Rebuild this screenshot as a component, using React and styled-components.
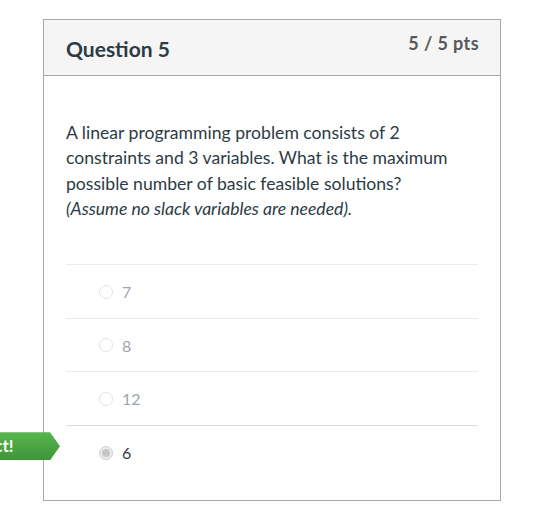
import React from "react";
import styled, { createGlobalStyle } from "styled-components";

const GlobalStyle = createGlobalStyle`
  html, body { margin: 0; padding: 0; background: #fff; }
  body { font-family: Lato, "Open Sans", sans-serif; overflow: hidden; }
  * { box-sizing: border-box; }
`;

const Page = styled.div`
  width: 541px;
  height: 516px;
  padding: 19px 0 0 43px;
`;

const Card = styled.section`
  width: 458px;
  border: 1px solid #a8a8a8;
  background: #fff;
`;

const Header = styled.header`
  display: flex;
  justify-content: space-between;
  align-items: flex-start;
  height: 56px;
  padding: 0 21px 0 22px;
  background: #f5f5f5;
  border-bottom: 1px solid #a8a8a8;
`;

const Title = styled.h2`
  margin: 0;
  padding-top: 17px;
  font-size: 21px;
  font-weight: 700;
  line-height: 24px;
  color: #2d3b45;
`;

const Points = styled.div`
  padding-top: 13px;
  font-size: 18px;
  font-weight: 700;
  letter-spacing: 0.4px;
  line-height: 20px;
  color: #555a5f;
`;

const Body = styled.div`
  padding: 44px 22px 21px 22px;
`;

const QuestionText = styled.div`
  font-size: 17.6px;
  line-height: 25.3px;
  color: #2d3b45;
  margin-bottom: 43px;
`;

const Hint = styled.em`
  font-style: italic;
`;

const AnswerList = styled.div`
  display: flex;
  flex-direction: column;
`;

const Row = styled.div`
  position: relative;
  display: flex;
  align-items: center;
  gap: 9px;
  height: ${(p) => (p.$tall ? 54 : 53)}px;
  padding-left: 33px;
  border-top: 1px solid ${(p) => (p.$selected ? "#dcdcdc" : "#ebebeb")};
`;

const Radio = styled.span`
  flex: none;
  display: flex;
  align-items: center;
  justify-content: center;
  width: 14px;
  height: 14px;
  border-radius: 50%;
  border: 1px solid ${(p) => (p.$checked ? "#cfcfcf" : "#e3e3e3")};
  background: ${(p) => (p.$checked ? "#ececec" : "#fff")};
  &::after {
    content: "";
    display: ${(p) => (p.$checked ? "block" : "none")};
    width: 8px;
    height: 8px;
    border-radius: 50%;
    background: #c6c6c6;
  }
`;

const AnswerLabel = styled.span`
  font-size: 16px;
  line-height: 20px;
  padding-top: 1px;
  color: ${(p) => (p.$selected ? "#2d3b45" : "#a0a4a8")};
`;

const Flag = styled.div`
  position: absolute;
  top: 6px;
  right: calc(100% + 6px);
  width: 120px;
  height: 28px;
  padding-left: 12px;
  font-size: 17px;
  font-weight: 700;
  line-height: 27px;
  color: #fff;
  background: linear-gradient(#58b54d, #3d9639);
  clip-path: polygon(0 0, calc(100% - 10px) 0, 100% 50%, calc(100% - 10px) 100%, 0 100%);
`;

const answers = [
  { label: "7" },
  { label: "8" },
  { label: "12" },
  { label: "6", selected: true, correct: true },
];

export default function App() {
  return (
    <>
      <GlobalStyle />
      <Page>
        <Card>
          <Header>
            <Title>Question 5</Title>
            <Points>5 / 5 pts</Points>
          </Header>
          <Body>
            <QuestionText>
              A linear programming problem consists of 2 constraints and 3 variables. What is the maximum
              possible number of basic feasible solutions?
              <br />
              <Hint>(Assume no slack variables are needed).</Hint>
            </QuestionText>
            <AnswerList>
              {answers.map((a, i) => (
                <Row key={a.label} $selected={a.selected} $tall={i !== 1}>
                  {a.correct && <Flag>Correct!</Flag>}
                  <Radio $checked={a.selected} />
                  <AnswerLabel $selected={a.selected}>{a.label}</AnswerLabel>
                </Row>
              ))}
            </AnswerList>
          </Body>
        </Card>
      </Page>
    </>
  );
}
